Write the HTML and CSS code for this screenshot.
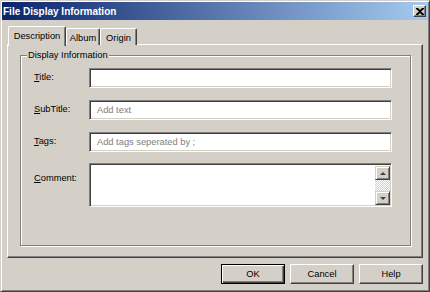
FILE: index.html
```html
<!DOCTYPE html>
<html>
<head>
<meta charset="utf-8">
<link rel="stylesheet" href="styles.css">
</head>
<body>
<div class="window">
  <div class="titlebar">
    <span class="title">File Display Information</span>
    <div class="close">
      <svg width="8" height="7" viewBox="0 0 8 7"><path d="M0 0h2l2 2 2-2h2v1L5 3.5 8 6v1H6L4 5 2 7H0V6l3-2.5L0 1z" fill="#000"/></svg>
    </div>
  </div>
  <div class="content">
    <div class="tabs">
      <div class="tab active">Description</div>
      <div class="tab album">Album</div>
      <div class="tab origin">Origin</div>
    </div>
    <div class="panel">
      <div class="group">
        <span class="legend">Display Information</span>
        <div class="row">
          <span class="label"><u>T</u>itle:</span>
          <div class="field"></div>
        </div>
        <div class="row">
          <span class="label"><u>S</u>ubTitle:</span>
          <div class="field"><span class="ph">Add text</span></div>
        </div>
        <div class="row">
          <span class="label"><u>T</u>ags:</span>
          <div class="field"><span class="ph">Add tags seperated by ;</span></div>
        </div>
        <div class="row comment-row">
          <span class="label comment-label"><u>C</u>omment:</span>
          <div class="field comment">
            <div class="scrollbar">
              <div class="sbtn"><span class="arrow up"></span></div>
              <div class="track"></div>
              <div class="sbtn"><span class="arrow down"></span></div>
            </div>
          </div>
        </div>
      </div>
    </div>
    <div class="buttons">
      <div class="btn default"><span>OK</span></div>
      <div class="btn"><span>Cancel</span></div>
      <div class="btn"><span>Help</span></div>
    </div>
  </div>
</div>
</body>
</html>
```
FILE: styles.css
```css
html, body {
  margin: 0;
  padding: 0;
}
body {
  width: 430px;
  height: 292px;
  overflow: hidden;
  font-family: "Liberation Sans", Arial, sans-serif;
  font-size: 9.3px;
  color: #000;
}
.window {
  width: 430px;
  height: 292px;
  box-sizing: border-box;
  background: #d4d0c8;
  border: 1px solid;
  border-color: #d4d0c8 #404040 #404040 #d4d0c8;
  box-shadow: inset 1px 1px #fff, inset -1px -1px #808080;
  padding: 1px;
}
.titlebar {
  height: 18px;
  background: linear-gradient(to right, #0a246a, #a6caf0);
  display: flex;
  align-items: center;
  justify-content: space-between;
  padding: 0 2px 0 1px;
}
.title {
  color: #fff;
  font-weight: bold;
  font-size: 10px;
}
.close {
  width: 13px;
  height: 12px;
  box-sizing: border-box;
  background: #d4d0c8;
  border: 1px solid;
  border-color: #fff #404040 #404040 #fff;
  box-shadow: inset -1px -1px #808080;
  display: flex;
  align-items: center;
  justify-content: center;
}
.content {
  padding: 5px 5px 0 5px;
}
.tabs {
  display: flex;
  align-items: flex-end;
  height: 20px;
  padding-left: 1px;
  position: relative;
  z-index: 1;
}
.tab {
  box-sizing: border-box;
  height: 17px;
  border: 1px solid;
  border-color: #fff #404040 transparent #fff;
  border-bottom: none;
  border-radius: 2px 2px 0 0;
  box-shadow: inset -1px 0 #808080;
  display: flex;
  align-items: center;
  justify-content: center;
  background: #d4d0c8;
}
.tab.active {
  width: 58px;
  height: 20px;
  margin-bottom: -1px;
  padding-bottom: 1px;
}
.tab.album {
  width: 34px;
  padding-top: 1px;
}
.tab.origin {
  width: 37px;
  margin-left: 0;
  padding-top: 1px;
}
.panel {
  width: 416px;
  height: 214px;
  box-sizing: border-box;
  margin-top: -1px;
  border: 1px solid;
  border-color: #fff #404040 #404040 #fff;
  box-shadow: inset -1px -1px #808080;
  padding: 10px 0 0 12px;
}
.group {
  position: relative;
  width: 391px;
  height: 191px;
  box-sizing: border-box;
  border: 1px solid #808080;
  box-shadow: inset 1px 1px #fff, 1px 1px #fff;
  padding: 12px 0 0 13px;
}
.legend {
  position: absolute;
  top: -7px;
  left: 6px;
  padding: 0 1px;
  background: #d4d0c8;
  line-height: 12px;
}
.row {
  display: flex;
  align-items: flex-start;
  margin-bottom: 12px;
}
.label {
  width: 55px;
  flex: none;
  padding-top: 4px;
  line-height: 11px;
}
.comment-row {
  margin-top: -1px;
}
.comment-label {
  padding-top: 10px;
}
.field {
  width: 303px;
  height: 20px;
  box-sizing: border-box;
  background: #fff;
  border: 1px solid;
  border-color: #808080 #fff #fff #808080;
  box-shadow: inset 1px 1px #404040, inset -1px -1px #d4d0c8;
  padding: 3px 0 0 7px;
  line-height: 12px;
}
.ph {
  color: #808080;
}
.field.comment {
  height: 44px;
  padding: 2px 1px 1px 2px;
  display: flex;
  justify-content: flex-end;
}
.scrollbar {
  width: 15px;
  display: flex;
  flex-direction: column;
}
.sbtn {
  height: 14px;
  box-sizing: border-box;
  background: #d4d0c8;
  border: 1px solid;
  border-color: #d4d0c8 #404040 #404040 #d4d0c8;
  box-shadow: inset 1px 1px #fff, inset -1px -1px #808080;
  display: flex;
  align-items: center;
  justify-content: center;
}
.track {
  flex: 1;
  background: repeating-conic-gradient(#fff 0 25%, #d4d0c8 0 50%) 0 0 / 2px 2px;
}
.arrow {
  width: 0;
  height: 0;
  border-left: 3px solid transparent;
  border-right: 3px solid transparent;
}
.arrow.up {
  border-bottom: 3px solid #404040;
}
.arrow.down {
  border-top: 3px solid #404040;
}
.buttons {
  display: flex;
  justify-content: flex-end;
  gap: 5px;
  margin-top: 6px;
  width: 416px;
}
.btn {
  width: 64px;
  height: 20px;
  box-sizing: border-box;
  border: 1px solid;
  border-color: #fff #404040 #404040 #fff;
  box-shadow: inset -1px -1px #808080;
  display: flex;
  align-items: center;
  justify-content: center;
}
.btn.default {
  border: 1px solid #000;
  box-shadow: inset 1px 1px #fff, inset -1px -1px #404040, inset -2px -2px #808080;
}
```
